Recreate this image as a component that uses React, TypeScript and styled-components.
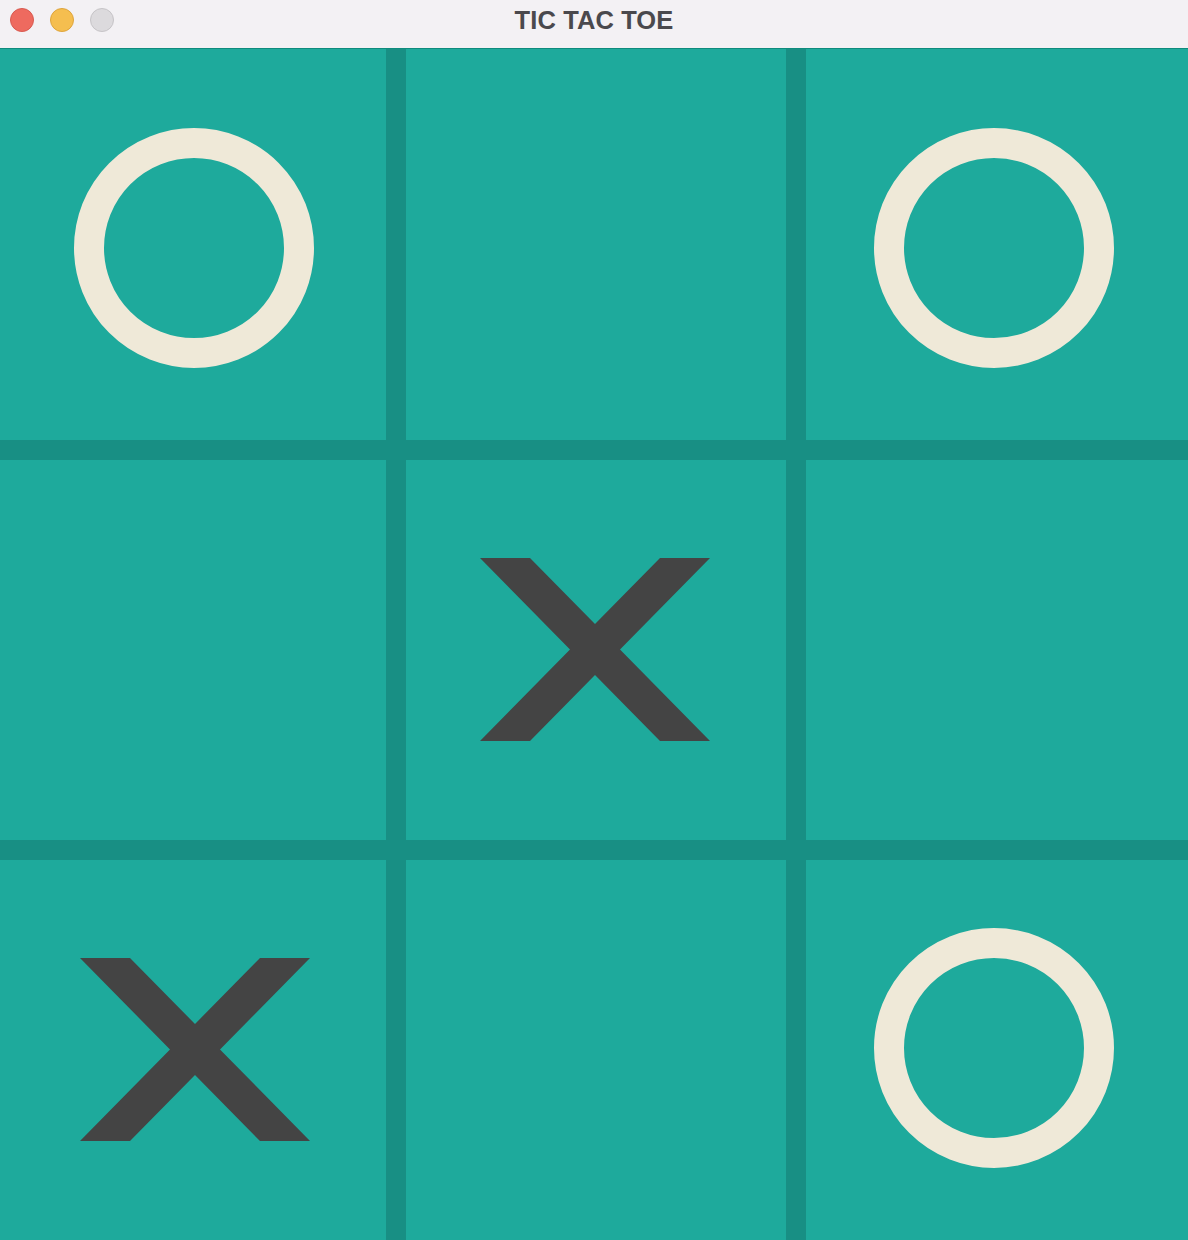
import React from "react";
import styled, { createGlobalStyle } from "styled-components";

const GlobalStyle = createGlobalStyle`
  html, body {
    margin: 0;
    padding: 0;
    background: #1eaa9c;
  }
  body {
    font-family: "Liberation Sans", Arial, sans-serif;
  }
`;

const Window = styled.div`
  width: 1188px;
  height: 1240px;
  display: flex;
  flex-direction: column;
  overflow: hidden;
`;

const TitleBar = styled.div`
  height: 49px;
  flex: 0 0 49px;
  box-sizing: border-box;
  padding-bottom: 8px;
  background: #f3f1f4;
  border-bottom: 1px solid #0f8b7d;
  display: grid;
  grid-template-columns: 1fr auto 1fr;
  align-items: center;
`;

const Lights = styled.div`
  display: flex;
  gap: 16px;
  padding-left: 10px;
`;

const Light = styled.span<{ $fill: string; $ring: string }>`
  width: 24px;
  height: 24px;
  border-radius: 50%;
  box-sizing: border-box;
  background: ${(p) => p.$fill};
  border: 1px solid ${(p) => p.$ring};
`;

const Title = styled.h1`
  margin: 0;
  font-family: "Liberation Sans", Arial, sans-serif;
  font-weight: 700;
  font-size: 25.5px;
  letter-spacing: 0.1px;
  color: #4a494d;
  line-height: 1;
  padding-top: 1px;
`;

const Board = styled.div`
  flex: 1;
  display: grid;
  grid-template-columns: 386px 380px 382px;
  grid-template-rows: 391px 380px 380px;
  gap: 20px;
  background: #188f84;
`;

const Cell = styled.div`
  background: #1eaa9c;
  display: flex;
  align-items: center;
  justify-content: center;
`;

const Mark = styled.div<{ $dx: number; $dy: number }>`
  display: flex;
  transform: translate(${(p) => p.$dx}px, ${(p) => p.$dy}px);
`;

const Ring = styled.div`
  width: 240px;
  height: 240px;
  box-sizing: border-box;
  border-radius: 50%;
  border: 30px solid #efe9d8;
`;

const Cross = () => (
  <svg width="230" height="183" viewBox="0 0 230 183">
    <polygon
      fill="#444444"
      points="0,0 50,0 115,66 180,0 230,0 140,91.5 230,183 180,183 115,117 50,183 0,183 90,91.5"
    />
  </svg>
);

type CellData = { v: "X" | "O" | ""; dx: number; dy: number };

const cells: CellData[] = [
  { v: "O", dx: 1, dy: 3 },
  { v: "", dx: 0, dy: 0 },
  { v: "O", dx: -3, dy: 3 },
  { v: "", dx: 0, dy: 0 },
  { v: "X", dx: -1, dy: -1 },
  { v: "", dx: 0, dy: 0 },
  { v: "X", dx: 2, dy: -1 },
  { v: "", dx: 0, dy: 0 },
  { v: "O", dx: -3, dy: -2 },
];

export default function App() {
  return (
    <>
      <GlobalStyle />
      <Window>
        <TitleBar>
          <Lights>
            <Light $fill="#ee6a5f" $ring="#d85a50" />
            <Light $fill="#f5be4f" $ring="#dea53c" />
            <Light $fill="#dcdadd" $ring="#c6c4c7" />
          </Lights>
          <Title>TIC TAC TOE</Title>
          <span />
        </TitleBar>
        <Board>
          {cells.map((c, i) => (
            <Cell key={i}>
              {c.v && (
                <Mark $dx={c.dx} $dy={c.dy}>
                  {c.v === "O" ? <Ring /> : <Cross />}
                </Mark>
              )}
            </Cell>
          ))}
        </Board>
      </Window>
    </>
  );
}
